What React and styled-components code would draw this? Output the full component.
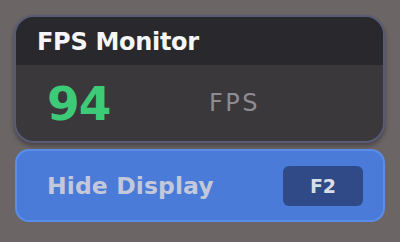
import React from "react";
import styled, { createGlobalStyle } from "styled-components";

const GlobalStyle = createGlobalStyle`
  html, body {
    margin: 0;
    padding: 0;
    background: #6b6566;
  }
  body {
    font-family: "DejaVu Sans", "Liberation Sans", sans-serif;
  }
`;

const Page = styled.div`
  width: 400px;
  height: 242px;
  box-sizing: border-box;
  padding: 15px 15px 0 14px;
  display: flex;
  flex-direction: column;
  gap: 6px;
`;

const Card = styled.div`
  border: 2px solid #575b78;
  border-radius: 20px;
  overflow: hidden;
  background: #3a383b;
  box-shadow: 0 3px 4px rgba(30, 28, 30, 0.45);
`;

const Header = styled.div`
  height: 48px;
  background: #29282c;
  display: flex;
  align-items: center;
  padding: 0 21px;
  padding-top: 1px;
  box-sizing: border-box;
`;

const Title = styled.span`
  color: #f6f6f6;
  font-weight: 700;
  font-size: 24px;
  letter-spacing: -0.3px;
`;

const Body = styled.div`
  height: 76px;
  display: grid;
  grid-template-columns: 162px auto;
  align-items: center;
  padding: 0 31px;
  box-sizing: border-box;
`;

const Value = styled.span`
  color: #3ecb78;
  font-weight: 700;
  font-size: 47px;
  line-height: 1;
  letter-spacing: -1px;
`;

const Unit = styled.span`
  color: #8e8c90;
  font-size: 24px;
  letter-spacing: 2.5px;
`;

const Button = styled.button`
  height: 73px;
  width: 370px;
  margin-left: 1px;
  border: 2px solid #5a8de8;
  border-radius: 14px;
  background: #4a7bd8;
  display: flex;
  align-items: center;
  justify-content: space-between;
  padding: 0 20px 0 30px;
  box-sizing: border-box;
  font-family: inherit;
  cursor: pointer;
`;

const Label = styled.span`
  color: #c3c8da;
  font-weight: 700;
  font-size: 23.5px;
  letter-spacing: 0.1px;
`;

const Key = styled.span`
  width: 80px;
  height: 40px;
  border-radius: 6px;
  background: #2f4a86;
  color: #d9dde8;
  font-weight: 700;
  font-size: 19px;
  display: flex;
  align-items: center;
  justify-content: center;
`;

export default function App() {
  return (
    <>
      <GlobalStyle />
      <Page>
        <Card>
          <Header>
            <Title>FPS Monitor</Title>
          </Header>
          <Body>
            <Value>94</Value>
            <Unit>FPS</Unit>
          </Body>
        </Card>
        <Button>
          <Label>Hide Display</Label>
          <Key>F2</Key>
        </Button>
      </Page>
    </>
  );
}
